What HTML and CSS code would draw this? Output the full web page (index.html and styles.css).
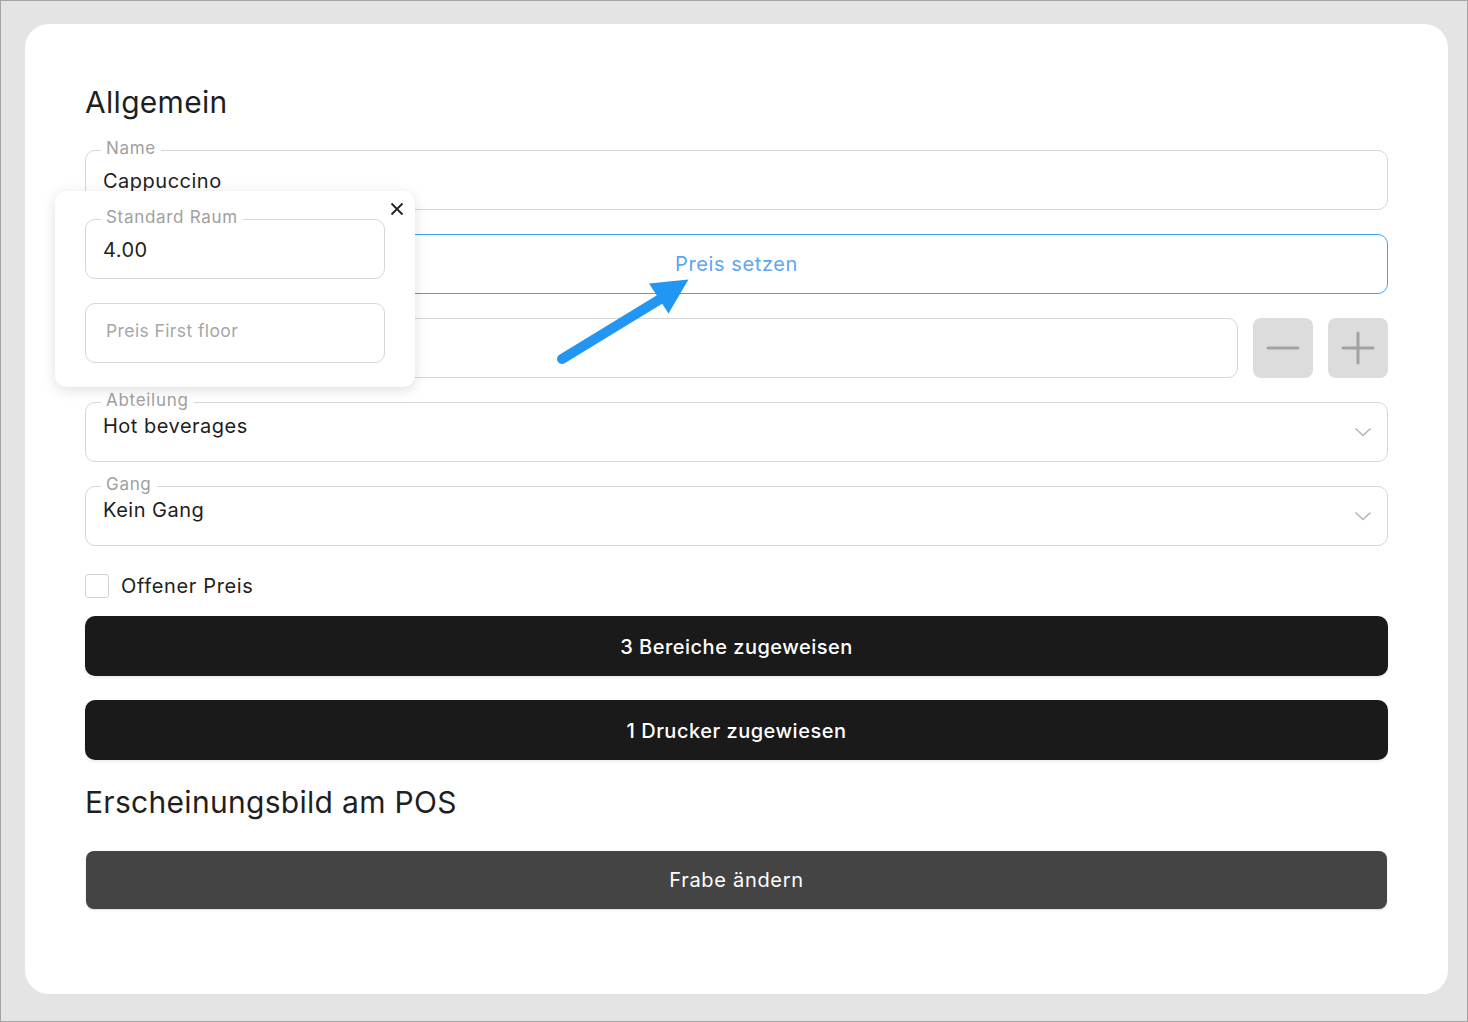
FILE: index.html
```html
<!DOCTYPE html>
<html lang="de">
<head>
<meta charset="utf-8">
<title>Artikel</title>
<link rel="stylesheet" href="styles.css">
</head>
<body>
<div class="frame">
  <div class="card">
    <h1 class="title">Allgemein</h1>
    <div class="form">
      <div class="field">
        <span class="label">Name</span>
        <span class="value">Cappuccino</span>
      </div>
      <div class="field field-action">
        <span class="action">Preis setzen</span>
      </div>
      <div class="stepper-row">
        <div class="field field-grow"></div>
        <button class="step" type="button" aria-label="minus">
          <svg viewBox="0 0 60 60" width="60" height="60"><path d="M15 30 H45" stroke="#a2a2a2" stroke-width="3" stroke-linecap="round"/></svg>
        </button>
        <button class="step" type="button" aria-label="plus">
          <svg viewBox="0 0 60 60" width="60" height="60"><path d="M15 30 H45 M30 15 V45" stroke="#a2a2a2" stroke-width="3" stroke-linecap="round"/></svg>
        </button>
      </div>
      <div class="field field-select">
        <span class="label">Abteilung</span>
        <span class="value">Hot beverages</span>
        <svg class="chevron" viewBox="0 0 18 10" width="18" height="10"><path d="M1.5 1.5 L9 8.5 L16.5 1.5" fill="none" stroke="#b4b4b4" stroke-width="1.5"/></svg>
      </div>
      <div class="field field-select">
        <span class="label">Gang</span>
        <span class="value">Kein Gang</span>
        <svg class="chevron" viewBox="0 0 18 10" width="18" height="10"><path d="M1.5 1.5 L9 8.5 L16.5 1.5" fill="none" stroke="#b4b4b4" stroke-width="1.5"/></svg>
      </div>
    </div>
    <label class="check"><span class="box"></span><span>Offener Preis</span></label>
    <button class="btn btn-dark" type="button">3 Bereiche zugeweisen</button>
    <button class="btn btn-dark btn-second" type="button">1 Drucker zugewiesen</button>
    <h2 class="title title-second">Erscheinungsbild am POS</h2>
    <button class="btn btn-gray" type="button">Frabe ändern</button>

    <div class="popover">
      <button class="close" type="button" aria-label="schließen">
        <svg viewBox="0 0 14 14" width="14" height="14"><path d="M1.5 1.5 L12.5 12.5 M12.5 1.5 L1.5 12.5" stroke="#222" stroke-width="1.8"/></svg>
      </button>
      <div class="field">
        <span class="label">Standard Raum</span>
        <span class="value">4.00</span>
      </div>
      <div class="field field-empty">
        <span class="placeholder">Preis First floor</span>
      </div>
    </div>

    <svg class="arrow" viewBox="0 0 170 110" width="170" height="110">
      <path d="M22 89 L122 28" stroke="#2196f3" stroke-width="10" stroke-linecap="round"/>
      <path d="M148.5 9.5 L109 13.5 L128.5 43.5 Z" fill="#2196f3"/>
    </svg>
  </div>
</div>
</body>
</html>
```

FILE: styles.css
```css
* { box-sizing: border-box; }

html, body {
  margin: 0;
  padding: 0;
}

body {
  font-family: Inter, "Noto Sans", "Liberation Sans", sans-serif;
  color: #1e1e1e;
  background: #e4e4e4;
}

.frame {
  width: 1468px;
  height: 1022px;
  border: 1px solid #a4a4a4;
  background: #e4e4e4;
  padding: 23px 19px 27px 24px;
  display: flex;
}

.card {
  position: relative;
  flex: 1;
  background: #ffffff;
  border-radius: 24px;
  padding: 60px 60px 0 60px;
  display: flex;
  flex-direction: column;
}

.title {
  margin: 0;
  font-size: 30px;
  line-height: 36px;
  font-weight: 400;
  letter-spacing: 0.3px;
  color: #1f1f1f;
}

.form {
  margin-top: 30px;
  display: flex;
  flex-direction: column;
  gap: 24px;
}

.field {
  position: relative;
  height: 60px;
  border: 1px solid #d6d6d6;
  border-radius: 10px;
  padding: 2px 17px 0 17px;
  display: flex;
  align-items: center;
  background: transparent;
}

.field-empty {
  padding: 0 17px 4px 17px;
}

.label {
  position: absolute;
  left: 15px;
  top: -13px;
  padding: 0 5px;
  background: #ffffff;
  font-size: 17px;
  line-height: 20px;
  letter-spacing: 0.7px;
  color: #a0a0a0;
}

.value {
  font-size: 20px;
  line-height: 24px;
  letter-spacing: 0.5px;
  color: #1e1e1e;
}

.placeholder {
  margin-left: 3px;
  font-size: 17.5px;
  line-height: 24px;
  letter-spacing: 0.4px;
  color: #a6a6a6;
}

.field-action {
  border-color: #42a5f5;
  justify-content: center;
  padding-top: 0;
}

.action {
  font-size: 20px;
  line-height: 24px;
  letter-spacing: 0.6px;
  color: #5ba7f0;
}

.stepper-row {
  display: flex;
  gap: 15px;
}

.field-grow { flex: 1; }

.step {
  width: 60px;
  height: 60px;
  border: none;
  padding: 0;
  border-radius: 8px;
  background: #dcdcdc;
  display: flex;
  align-items: center;
  justify-content: center;
}

.step svg { display: block; }

.field-select {
  align-items: flex-start;
  padding-top: 11px;
}

.chevron {
  position: absolute;
  right: 15px;
  top: 24px;
}

.check {
  margin-top: 28px;
  display: flex;
  align-items: center;
  gap: 12px;
  height: 24px;
  font-size: 20px;
  line-height: 24px;
  letter-spacing: 0.65px;
  color: #222;
}

.box {
  width: 24px;
  height: 24px;
  border: 1px solid #d4d4d4;
  border-radius: 3px;
  background: #fff;
}

.btn {
  display: block;
  width: 100%;
  border: none;
  font-family: inherit;
  font-size: 20px;
  line-height: 24px;
  color: #ffffff;
  text-align: center;
}

.btn-dark {
  margin-top: 18px;
  height: 60px;
  padding-top: 2px;
  background: #1a1a1a;
  border-radius: 10px;
  font-weight: 500;
  letter-spacing: 0.5px;
  box-shadow: 0 2px 3px rgba(0, 0, 0, 0.08);
}

.btn-second { margin-top: 24px; }

.title-second { margin-top: 24px; }

.btn-gray {
  margin: 31px 1px 0 1px;
  width: auto;
  height: 58px;
  background: #444444;
  border-radius: 8px;
  font-weight: 400;
  letter-spacing: 0.7px;
  box-shadow: 0 1px 2px rgba(0, 0, 0, 0.15);
}

.popover {
  position: absolute;
  left: 30px;
  top: 167px;
  width: 360px;
  height: 196px;
  background: #ffffff;
  border-radius: 12px;
  box-shadow: 0 3px 14px rgba(0, 0, 0, 0.13);
  padding: 28px 30px 0 30px;
  display: flex;
  flex-direction: column;
  gap: 24px;
}

.close {
  position: absolute;
  right: 11px;
  top: 11px;
  width: 14px;
  height: 14px;
  padding: 0;
  border: none;
  background: transparent;
}

.close svg { display: block; }

.arrow {
  position: absolute;
  left: 515px;
  top: 246px;
}
```
